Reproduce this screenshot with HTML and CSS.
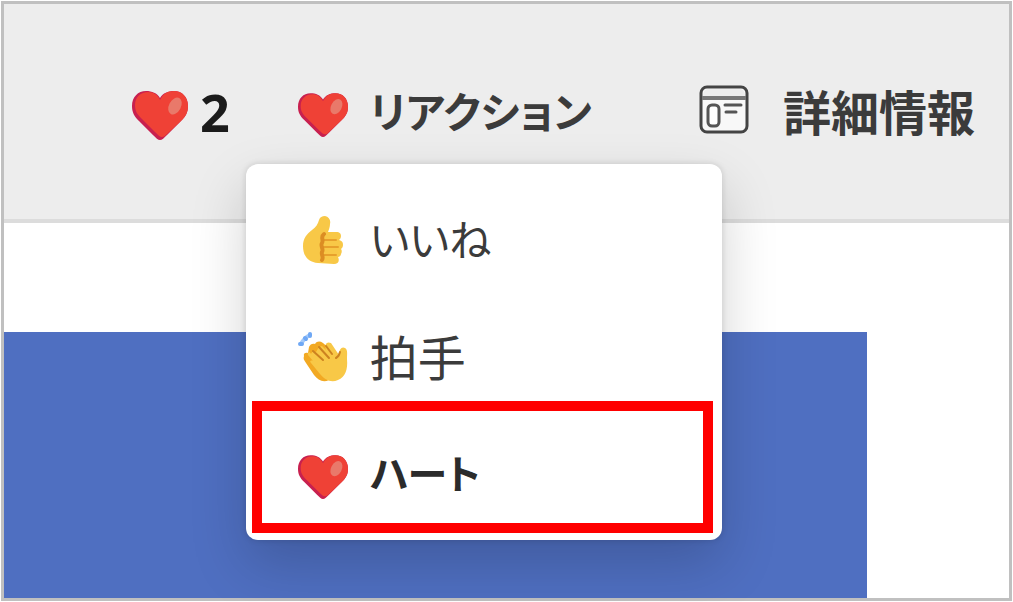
FILE: index.html
```html
<!DOCTYPE html>
<html lang="ja">
<head>
<meta charset="utf-8">
<meta name="viewport" content="width=device-width, initial-scale=1">
<title>リアクション</title>
<link rel="stylesheet" href="styles.css">
</head>
<body>
<svg class="defs" aria-hidden="true">
  <symbol id="heart" viewBox="0 -3 56 56">
    <path fill="#c8204f" d="M28 53C26 53 24 51 21 48L7 34C2 29 0 25 0 19C0 10 6 4 14 4C20 4 25 6 28 11C31 6 36 4 42 4C50 4 56 10 56 19C56 25 54 29 49 34L35 48C32 51 30 53 28 53Z"/>
    <path fill="#ef4136" d="M30 50C28 50 26 48 23 45L10 32C5 27 3 24 3 18C3 10 9 5 16 5C22 5 26 8 28 13C31 7 35 4 42 4C50 4 56 10 56 19C56 25 54 29 49 34L35 47C33 49 32 50 30 50Z"/>
    <ellipse cx="43" cy="19" rx="6" ry="9" transform="rotate(28 43 19)" fill="#e9796a"/>
  </symbol>
</svg>
<div class="frame">
  <header class="bar">
    <div class="count"><svg class="count-icon" aria-hidden="true"><use href="#heart"/></svg><span>2</span></div>
    <div class="reaction">
      <button class="action" type="button" aria-haspopup="menu" aria-expanded="true">
        <svg class="icon" aria-hidden="true"><use href="#heart"/></svg><span class="label">リアクション</span>
      </button>
      <div class="menu" role="menu">
        <button class="item" type="button" role="menuitem">
          <svg class="icon" viewBox="0 0 50 50" aria-hidden="true">
            <path fill="#f8c847" d="M5 31C5 23 9 19 14 15C18 12 20 9 21 5C22 2 24 1 27 1C31 2 33 5 32 9C32 12 31 14 30 17H38C42 17 43 19 43 21C43 23 42 24 41 25C44 26 45 27 45 30C45 32 44 33 43 34C44 35 44 37 43 39C43 41 41 42 40 42C42 46 40 49 36 49L20 48C10 47 5 41 5 31Z"/>
            <path fill="none" stroke="#e7a02c" stroke-width="2" stroke-linecap="round" d="M25 25H38M25 32H40M25 40H38"/>
            <path fill="none" stroke="#dc8d23" stroke-width="4" stroke-linecap="round" d="M26 19C22 22 26 25 24 28C22 31 26 34 24 37C23 40 26 42 24 45"/>
          </svg><span class="label">いいね</span>
        </button>
        <button class="item" type="button" role="menuitem">
          <svg class="icon" viewBox="0 0 50 50" aria-hidden="true">
            <path fill="none" stroke="#a3c9fa" stroke-width="4" stroke-linecap="round" d="M3 12C5 8 8 5 12 3"/>
            <path fill="none" stroke="#6fa8f5" stroke-width="4" stroke-linecap="round" d="M12 2V4M2 12H4M7 6L8 7"/>
            <path fill="#f2a923" d="M6 24C5 21 8 20 10 21L11 15C12 12 15 11 17 12C19 9 22 9 25 11L40 24L31 48C25 51 20 48 16 43L8 31C6 28 5 27 6 24Z"/>
            <path fill="#f8c847" d="M13 22C14 19 16 19 18 20L21 15L24 14L28 18C26 12 29 9 33 11L41 23C41 17 44 14 47 16C50 18 49 22 49 27C50 38 47 45 40 48C33 51 27 48 22 42L13 31C11 29 13 28 15 29L10 23C9 20 12 19 13 22Z"/>
            <path fill="none" stroke="#cc8220" stroke-width="2" stroke-linecap="round" d="M15 19L25 28M21 15L31 26M28 14L34 22M42 20C41 24 40 25 38 26"/>
          </svg><span class="label kanji">拍手</span>
        </button>
        <button class="item item-selected" type="button" role="menuitem">
          <svg class="icon" aria-hidden="true"><use href="#heart"/></svg><span class="label">ハート</span>
        </button>
      </div>
    </div>
    <button class="action details" type="button">
      <svg class="icon" viewBox="0 0 50 50" aria-hidden="true">
        <rect x="2" y="0" width="46" height="45" rx="6" fill="#f8f8f8" stroke="#444" stroke-width="3"/>
        <path d="M4 10C4 4 6 2 10 2H40C44 2 46 4 46 10Z" fill="#ededed"/>
        <path d="M3 11H47" stroke="#777" stroke-width="4"/>
        <rect x="9" y="18" width="11" height="21" rx="4" fill="#fff" stroke="#555" stroke-width="3"/>
        <path d="M26 18H42M27 25H37" stroke="#555" stroke-width="3" stroke-linecap="round"/>
      </svg><span class="label kanji">詳細情報</span>
    </button>
  </header>
  <main class="content"><div class="panel"></div></main>
</div>
</body>
</html>
```
FILE: styles.css
```css
* { box-sizing: border-box; }
body {
  margin: 0;
  padding: 1px;
  background: #fff;
  color: #3b3b3b;
  font-family: "Noto Sans CJK JP", sans-serif;
}
svg, symbol { overflow: visible; }
.defs { position: absolute; width: 0; height: 0; }
.frame {
  display: flex;
  flex-direction: column;
  min-height: calc(100vh - 2px);
  border: 3px solid #c0c0c0;
}
.bar {
  display: flex;
  align-items: flex-start;
  padding: 76px 34px 75px 128px;
  background: #ededed;
  border-bottom: 4px solid #dcdcdc;
}
.count, .action, .item { display: flex; align-items: center; white-space: nowrap; }
.count {
  gap: 12px;
  height: 64px;
  margin-right: 68px;
  color: #1b1b1b;
  font: 700 52px/64px "Open Sans", sans-serif;
}
.count-icon { width: 56px; height: 56px; }
.icon { flex: none; width: 50px; height: 50px; }
.action, .item {
  gap: 22px;
  padding: 0;
  border: 0;
  background: none;
  color: inherit;
  font-family: inherit;
  font-size: 42px;
  line-height: 64px;
  font-feature-settings: "palt";
}
.action { height: 64px; font-weight: 700; }
.details { gap: 34px; }
.label { padding-bottom: 4px; }
.kanji { font-size: 48px; }
.reaction { position: relative; margin-right: auto; }
.menu {
  position: absolute;
  top: 84px;
  left: -52px;
  z-index: 1;
  width: 476px;
  padding: 17px 0 8px;
  border-radius: 12px;
  background: #fff;
  box-shadow: 0 0 6px rgba(0, 0, 0, .14), 0 24px 56px rgba(0, 0, 0, .18);
}
.item { position: relative; width: 100%; height: 117px; padding-left: 52px; }
.item-selected { color: #2b2b2b; font-size: 40px; font-weight: 700; }
.item-selected::after {
  content: "";
  position: absolute;
  inset: -14px 9px -1px 6px;
  border: 10px solid #f00;
}
.content { display: flex; flex: 1; padding: 109px 142px 0 0; background: #fff; }
.panel { flex: 1; background: #4f6fc1; }
```
